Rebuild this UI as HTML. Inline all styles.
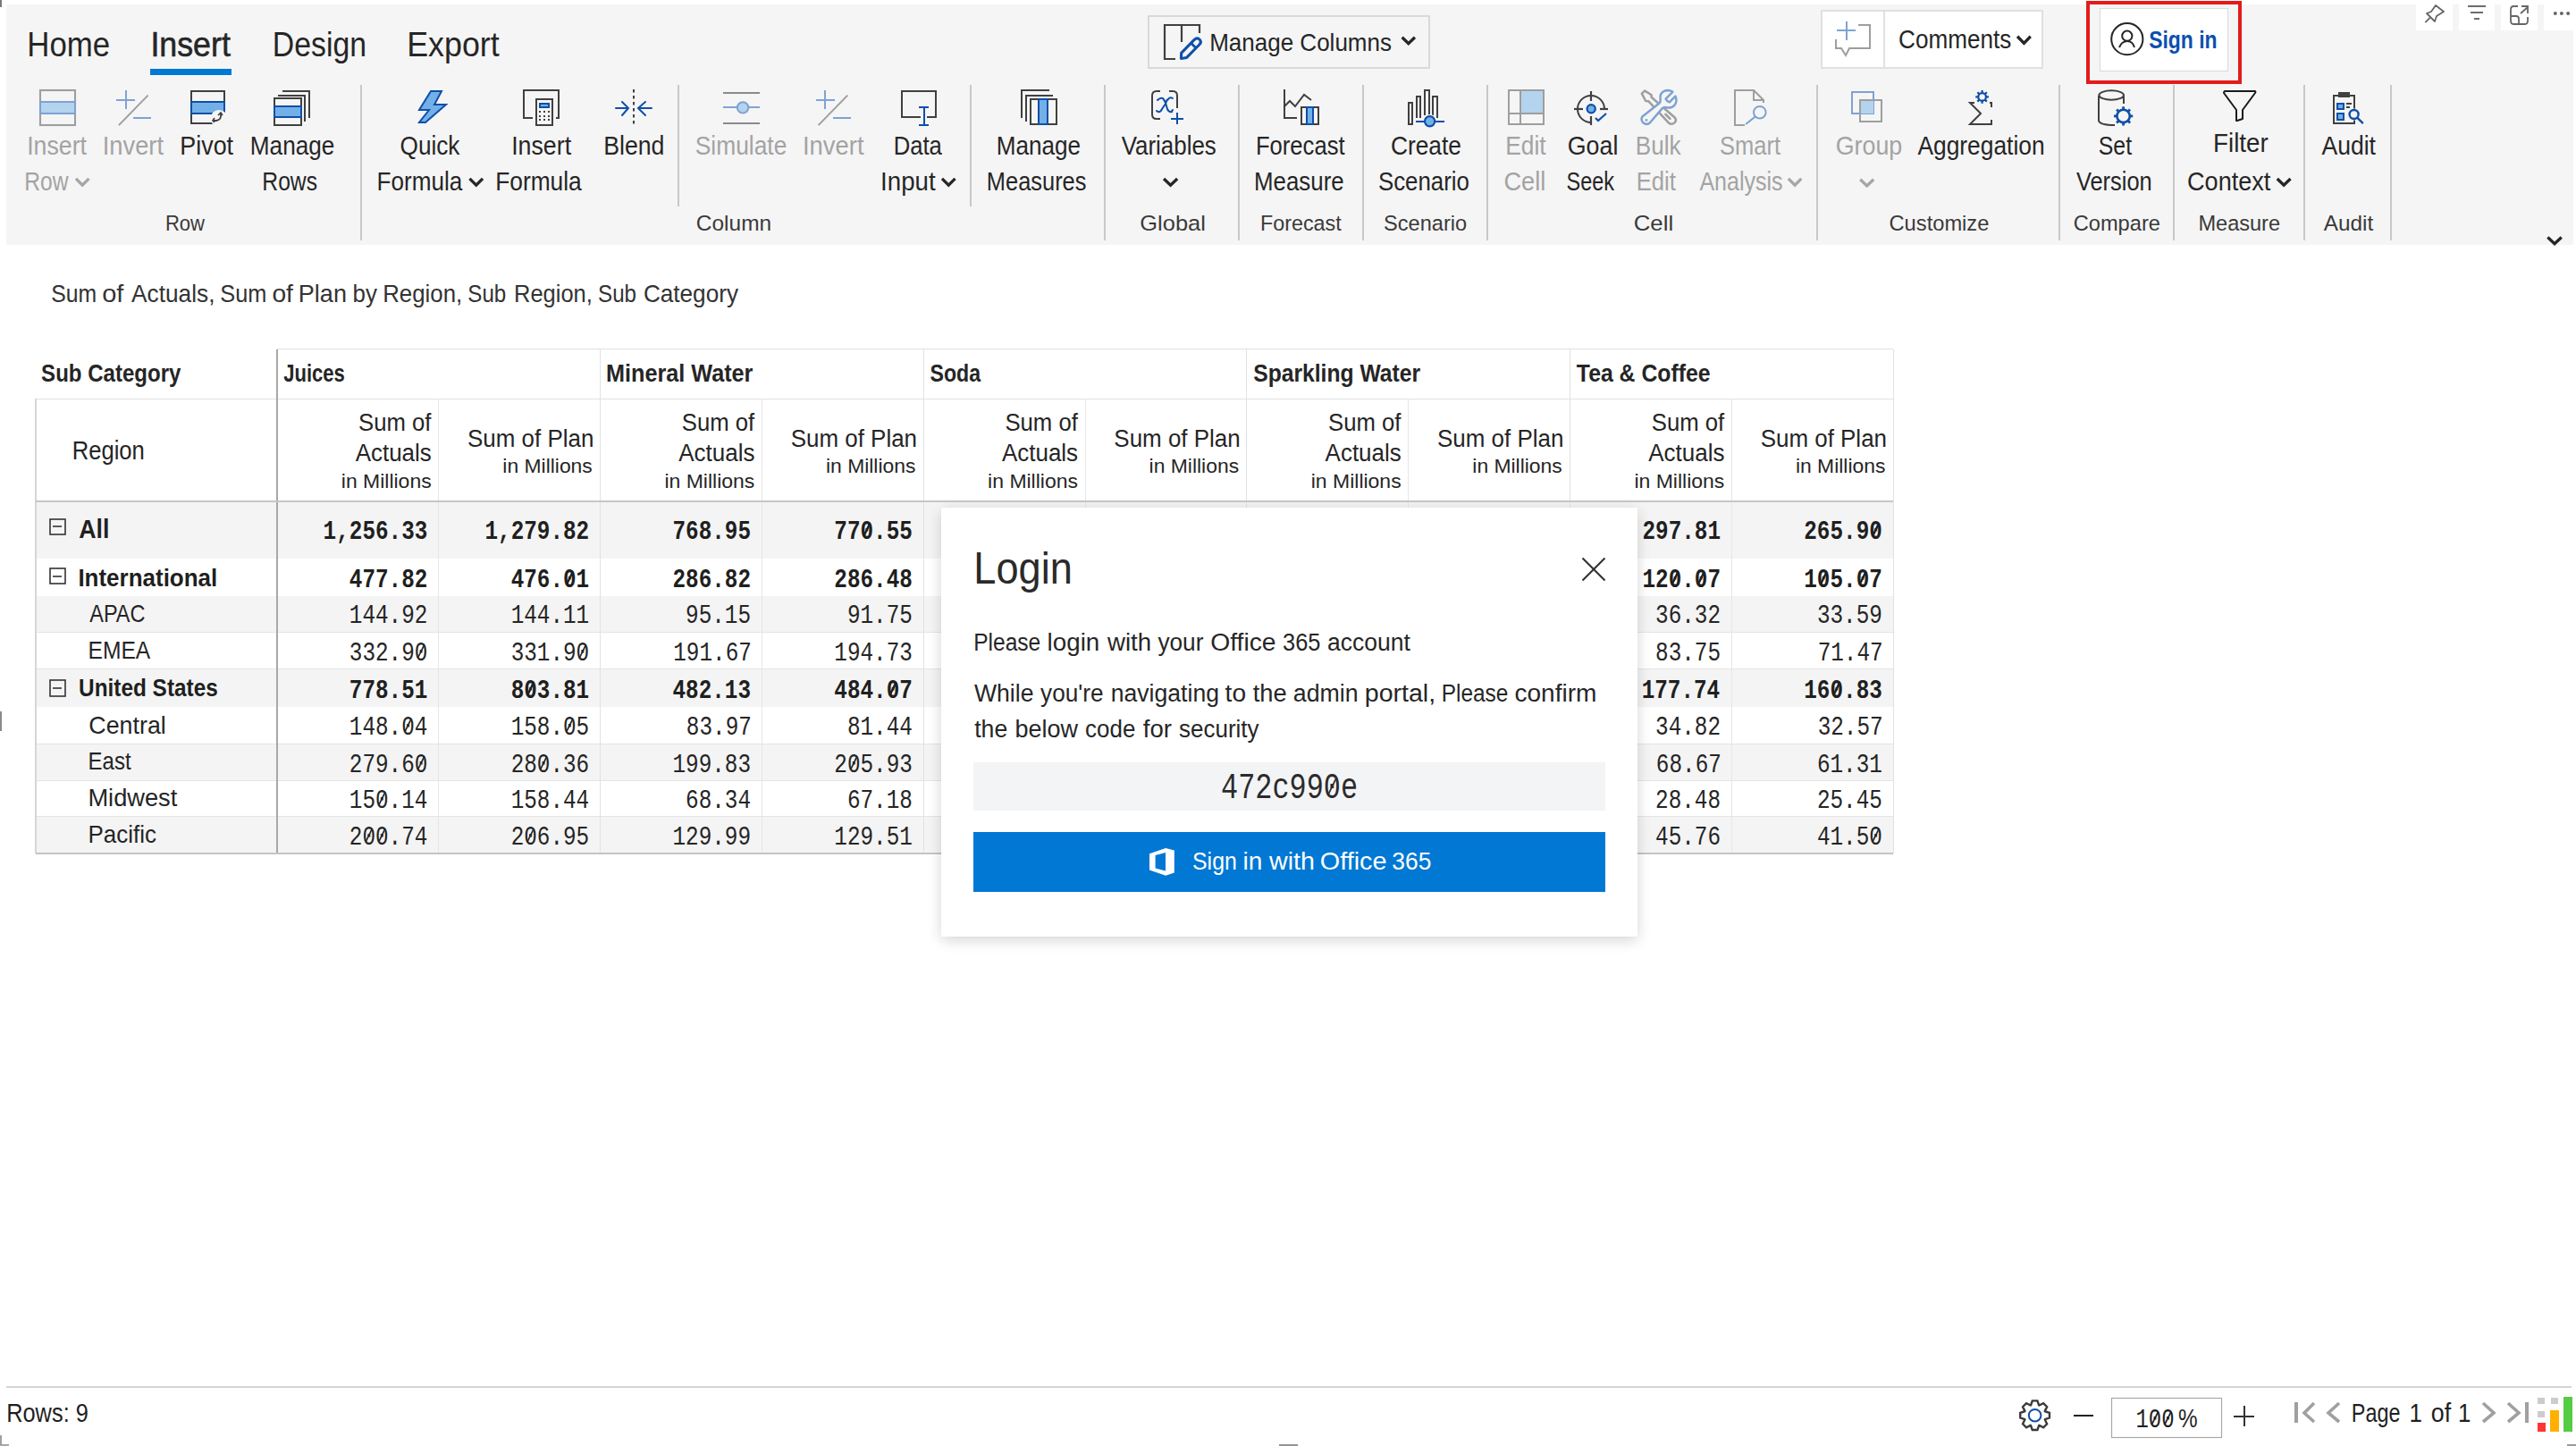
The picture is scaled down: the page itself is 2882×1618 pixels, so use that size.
<!DOCTYPE html>
<html><head><meta charset="utf-8"><title>Inforiver - Insert</title>
<style>html,body{margin:0;padding:0;background:#fff;width:2882px;height:1618px;overflow:hidden;font-family:"Liberation Sans",sans-serif}</style>
</head><body>
<svg width="2882" height="1618" viewBox="0 0 2882 1618" style="display:block"><defs><filter id="sh" x="-10%" y="-10%" width="120%" height="125%"><feGaussianBlur in="SourceAlpha" stdDeviation="8"/><feOffset dy="4" result="b"/><feComponentTransfer><feFuncA type="linear" slope="0.17"/></feComponentTransfer><feMerge><feMergeNode/></feMerge></filter></defs><g id="bg"><rect x="0.00" y="0.00" width="2882.00" height="1618.00" fill="#ffffff" /><rect x="0.00" y="0.00" width="2.00" height="8.00" fill="#7a7a7a" /><rect x="0.00" y="796.00" width="2.00" height="22.00" fill="#8a8a8a" /><path d="M1 1606 V1617 H10" stroke="#8a8a8a" stroke-width="1.6" fill="none" /><rect x="1431.00" y="1616.00" width="21.00" height="2.00" fill="#959595" /><rect x="2872.00" y="1616.00" width="10.00" height="2.00" fill="#9a9a9a" /></g><g id="ribbon"><rect x="7.00" y="5.00" width="2872.00" height="269.00" fill="#f5f5f5" /><rect x="2703.00" y="5.00" width="41.00" height="29.00" fill="#ffffff" /><rect x="2751.00" y="5.00" width="40.00" height="29.00" fill="#ffffff" /><rect x="2798.00" y="5.00" width="41.00" height="29.00" fill="#ffffff" /><rect x="2846.00" y="5.00" width="33.00" height="29.00" fill="#ffffff" /><path d="M2725 6 L2734 13 L2726 18 L2724 24 L2715 15 L2720 13 Z" stroke="#666" stroke-width="1.8" fill="none" stroke-linejoin="round"/><line x1="2718.60" y1="19.90" x2="2713.40" y2="25.10" stroke="#666" stroke-width="1.8" /><line x1="2761.00" y1="7.00" x2="2781.00" y2="7.00" stroke="#666" stroke-width="1.9" /><line x1="2764.00" y1="14.00" x2="2778.00" y2="14.00" stroke="#666" stroke-width="1.9" /><line x1="2768.00" y1="21.00" x2="2774.00" y2="21.00" stroke="#666" stroke-width="1.9" /><path d="M2817 7 H2812 Q2809 7 2809 11 V23 Q2809 27 2812 27 H2825 Q2828 27 2828 23 V19" stroke="#666" stroke-width="1.8" fill="none" /><path d="M2809 18 H2815 Q2818 18 2818 21 V27" stroke="#666" stroke-width="1.8" fill="none" /><path d="M2820 15 L2828 8 M2821 7 H2828 V15" stroke="#666" stroke-width="1.8" fill="none" /><circle cx="2858.8" cy="14.9" r="2" fill="#666"/><circle cx="2865.9" cy="14.9" r="2" fill="#666"/><circle cx="2873.1" cy="14.9" r="2" fill="#666"/><rect x="168.00" y="77.00" width="91.00" height="7.00" fill="#0078d4" /><rect x="1285.00" y="18.00" width="314.00" height="58.00" fill="none" stroke="#d0d0d0" stroke-width="1.5" /><path d="M1315 66 H1303 V28 H1342 V37" stroke="#404040" stroke-width="2.2" fill="none" /><line x1="1322.00" y1="28.00" x2="1322.00" y2="47.00" stroke="#404040" stroke-width="2.2" /><path d="M1321.4 65.4 L1321.6 59.4 L1336.2 44.4 Q1339.4 41.4 1342.2 44.2 Q1344.8 47 1341.8 50 L1327.4 64.6 Z" stroke="#0f4fa8" stroke-width="3" fill="#f5f5f5" stroke-linejoin="round"/><line x1="1332.60" y1="48.20" x2="1337.80" y2="53.40" stroke="#0f4fa8" stroke-width="2.8" /><path d="M1568.65 41.75 L1575.80 48.67 L1582.95 41.75" stroke="#262626" stroke-width="3.3" fill="none" stroke-linecap="butt" stroke-linejoin="miter"/><rect x="2038.00" y="12.00" width="247.00" height="64.00" fill="#ffffff" stroke="#e0e0e0" stroke-width="2" /><line x1="2108.00" y1="12.00" x2="2108.00" y2="76.00" stroke="#e0e0e0" stroke-width="2" /><line x1="2055.00" y1="34.00" x2="2076.00" y2="34.00" stroke="#7ea3d2" stroke-width="2" /><line x1="2066.00" y1="24.00" x2="2066.00" y2="45.00" stroke="#7ea3d2" stroke-width="2" /><path d="M2054 44 V54 H2060 L2065 62 L2069 54 H2092 V28 H2079" stroke="#9e9e9e" stroke-width="2" fill="none" /><path d="M2257.05 40.75 L2264.40 48.37 L2271.75 40.75" stroke="#262626" stroke-width="3.3" fill="none" stroke-linecap="butt" stroke-linejoin="miter"/><rect x="2336.00" y="3.00" width="170.00" height="89.00" fill="none" stroke="#e31b1b" stroke-width="4" /><rect x="2349.50" y="9.50" width="143.00" height="70.00" fill="#ffffff" stroke="#dcdcdc" stroke-width="1.2" /><circle cx="2379.8" cy="43.7" r="17.6" fill="none" stroke="#262626" stroke-width="2"/><circle cx="2379.8" cy="40.2" r="5.6" fill="none" stroke="#262626" stroke-width="2"/><path d="M2371 53 Q2374 46 2380 46 Q2386 46 2388 53" stroke="#262626" stroke-width="2" fill="none" /><path d="M2850.35 265.45 L2858.05 272.67 L2865.75 265.45" stroke="#262626" stroke-width="3.3" fill="none" stroke-linecap="butt" stroke-linejoin="miter"/><rect x="403.00" y="95.00" width="2.00" height="174.00" fill="#c8c8c8" /><rect x="1235.00" y="95.00" width="2.00" height="174.00" fill="#c8c8c8" /><rect x="1385.00" y="95.00" width="2.00" height="174.00" fill="#c8c8c8" /><rect x="1524.00" y="95.00" width="2.00" height="174.00" fill="#c8c8c8" /><rect x="1663.00" y="95.00" width="2.00" height="174.00" fill="#c8c8c8" /><rect x="2032.00" y="95.00" width="2.00" height="174.00" fill="#c8c8c8" /><rect x="2303.00" y="95.00" width="2.00" height="174.00" fill="#c8c8c8" /><rect x="2431.00" y="95.00" width="2.00" height="174.00" fill="#c8c8c8" /><rect x="2577.00" y="95.00" width="2.00" height="174.00" fill="#c8c8c8" /><rect x="2674.00" y="95.00" width="2.00" height="174.00" fill="#c8c8c8" /><rect x="758.00" y="95.00" width="2.00" height="136.00" fill="#c8c8c8" /><rect x="1085.00" y="95.00" width="2.00" height="136.00" fill="#c8c8c8" /><path d="M84.95 199.95 L92.20 207.17 L99.45 199.95" stroke="#a6a6a6" stroke-width="3.3" fill="none" stroke-linecap="butt" stroke-linejoin="miter"/><path d="M525.45 199.95 L532.75 207.17 L540.05 199.95" stroke="#262626" stroke-width="3.3" fill="none" stroke-linecap="butt" stroke-linejoin="miter"/><path d="M1053.95 199.95 L1061.25 207.17 L1068.55 199.95" stroke="#262626" stroke-width="3.3" fill="none" stroke-linecap="butt" stroke-linejoin="miter"/><path d="M1302.05 199.95 L1309.60 207.17 L1317.15 199.95" stroke="#262626" stroke-width="3.3" fill="none" stroke-linecap="butt" stroke-linejoin="miter"/><path d="M2000.85 199.95 L2008.10 207.17 L2015.35 199.95" stroke="#a6a6a6" stroke-width="3.3" fill="none" stroke-linecap="butt" stroke-linejoin="miter"/><path d="M2081.25 200.75 L2088.70 207.97 L2096.15 200.75" stroke="#a6a6a6" stroke-width="3.3" fill="none" stroke-linecap="butt" stroke-linejoin="miter"/><path d="M2547.75 199.95 L2555.15 207.17 L2562.55 199.95" stroke="#262626" stroke-width="3.3" fill="none" stroke-linecap="butt" stroke-linejoin="miter"/><rect x="45.00" y="101.00" width="39.00" height="39.00" fill="none" stroke="#9e9e9e" stroke-width="2.1" /><rect x="45.00" y="114.00" width="39.00" height="13.00" fill="#b4d3ef" stroke="#7ea3d2" stroke-width="2" /><line x1="130.00" y1="112.00" x2="151.00" y2="112.00" stroke="#7ea3d2" stroke-width="2" /><line x1="141.00" y1="101.00" x2="141.00" y2="122.00" stroke="#7ea3d2" stroke-width="2" /><line x1="132.90" y1="140.10" x2="165.60" y2="106.60" stroke="#9e9e9e" stroke-width="2" /><line x1="149.00" y1="132.00" x2="169.00" y2="132.00" stroke="#7ea3d2" stroke-width="2" /><line x1="913.00" y1="112.00" x2="934.00" y2="112.00" stroke="#7ea3d2" stroke-width="2" /><line x1="923.00" y1="101.00" x2="923.00" y2="122.00" stroke="#7ea3d2" stroke-width="2" /><line x1="915.60" y1="140.10" x2="948.30" y2="106.60" stroke="#9e9e9e" stroke-width="2" /><line x1="932.00" y1="132.00" x2="952.00" y2="132.00" stroke="#7ea3d2" stroke-width="2" /><rect x="214.00" y="102.00" width="37.00" height="36.00" fill="none" stroke="#404040" stroke-width="2" /><rect x="214.00" y="114.00" width="37.00" height="13.00" fill="#73b0e8" stroke="#0f4fa8" stroke-width="2" /><circle cx="245" cy="132.5" r="9.5" fill="#f5f5f5"/><path d="M238 135 L242 135 Q247 134 247 130 L247 127" stroke="#404040" stroke-width="1.8" fill="none" /><path d="M240 132 L238 135 L240 137 M244 129 L247 126 L249 129" stroke="#404040" stroke-width="1.6" fill="none" /><rect x="307.00" y="110.00" width="30.00" height="30.00" fill="#f5f5f5" stroke="#404040" stroke-width="2" /><rect x="307.00" y="119.00" width="30.00" height="12.00" fill="#73b0e8" stroke="#0f4fa8" stroke-width="2" /><path d="M311 107 H341 V136" stroke="#404040" stroke-width="2" fill="none" /><path d="M316 102 H346 V132" stroke="#404040" stroke-width="2" fill="none" /><path d="M482 102 H494 L486 117 H499 L476 137 H469 L480 123 H469 Z" stroke="#0f4fa8" stroke-width="2" fill="#73b0e8" stroke-linejoin="miter"/><path d="M596 132 H586 V101 H625 V132 H622" stroke="#404040" stroke-width="2" fill="none" /><rect x="600.00" y="111.00" width="18.00" height="29.00" fill="#f5f5f5" stroke="#404040" stroke-width="2" /><rect x="604.00" y="116.00" width="10.00" height="4.00" fill="#73b0e8" stroke="#0f4fa8" stroke-width="2" /><rect x="603.00" y="124.00" width="2.00" height="2.00" fill="#404040" /><rect x="608.00" y="124.00" width="2.00" height="2.00" fill="#404040" /><rect x="613.00" y="124.00" width="2.00" height="2.00" fill="#404040" /><rect x="603.00" y="129.00" width="2.00" height="2.00" fill="#404040" /><rect x="608.00" y="129.00" width="2.00" height="2.00" fill="#404040" /><rect x="613.00" y="129.00" width="2.00" height="2.00" fill="#404040" /><rect x="603.00" y="133.00" width="2.00" height="2.00" fill="#404040" /><rect x="608.00" y="133.00" width="2.00" height="2.00" fill="#404040" /><rect x="613.00" y="133.00" width="2.00" height="2.00" fill="#404040" /><line x1="709.00" y1="100.00" x2="709.00" y2="141.00" stroke="#404040" stroke-width="2" stroke-dasharray="3.6 3.4"/><path d="M689 121 H703 M696 114 L703 121 L696 129" stroke="#0f4fa8" stroke-width="2" fill="none" stroke-linecap="round"/><path d="M729 121 H714 M722 114 L714 121 L722 129" stroke="#0f4fa8" stroke-width="2" fill="none" stroke-linecap="round"/><line x1="809.00" y1="104.00" x2="850.00" y2="104.00" stroke="#8a8a8a" stroke-width="2" /><line x1="809.00" y1="120.00" x2="850.00" y2="120.00" stroke="#7ea3d2" stroke-width="2" /><circle cx="831.1" cy="120.4" r="6.2" fill="#b4d3ef" stroke="#7ea3d2" stroke-width="2"/><line x1="809.00" y1="138.00" x2="850.00" y2="138.00" stroke="#8a8a8a" stroke-width="2" /><path d="M1030 131 H1009 V102 H1047 V131 H1037" stroke="#404040" stroke-width="2" fill="none" /><line x1="1034.00" y1="120.00" x2="1034.00" y2="140.00" stroke="#0f4fa8" stroke-width="2" /><line x1="1028.00" y1="120.00" x2="1039.00" y2="120.00" stroke="#0f4fa8" stroke-width="2" /><line x1="1028.00" y1="140.00" x2="1039.00" y2="140.00" stroke="#0f4fa8" stroke-width="2" /><path d="M1143 132 V101 H1174" stroke="#404040" stroke-width="2" fill="none" /><path d="M1148 136 V107 H1178" stroke="#404040" stroke-width="2" fill="none" /><rect x="1153.00" y="111.00" width="29.00" height="28.00" fill="#f5f5f5" stroke="#404040" stroke-width="2" /><rect x="1162.00" y="111.00" width="10.00" height="28.00" fill="#73b0e8" stroke="#0f4fa8" stroke-width="2" /><path d="M1298 102 H1294 Q1289 102 1289 107 V128 Q1289 133 1294 133 H1298" stroke="#404040" stroke-width="2" fill="none" /><path d="M1308 102 H1312 Q1317 102 1317 107 V121" stroke="#404040" stroke-width="2" fill="none" /><path d="M1295 112 Q1298 109 1301 110 Q1302 111 1304 115 L1306 122 Q1308 126 1311 125 Q1311 124 1312 123" stroke="#0f4fa8" stroke-width="2" fill="none" stroke-linecap="round"/><path d="M1312 110 Q1309 108 1307 111 Q1305 112 1304 116 L1300 122 Q1298 126 1296 125 Q1295 125 1294 124" stroke="#0f4fa8" stroke-width="2" fill="none" stroke-linecap="round"/><line x1="1310.00" y1="133.00" x2="1324.00" y2="133.00" stroke="#0f4fa8" stroke-width="2" /><line x1="1317.00" y1="126.00" x2="1317.00" y2="139.00" stroke="#0f4fa8" stroke-width="2" /><path d="M1437 100 V132 H1451" stroke="#404040" stroke-width="2" fill="none" /><path d="M1437 119 L1443 113 L1449 119 L1459 106 L1467 112" stroke="#404040" stroke-width="2" fill="none" /><rect x="1456.00" y="120.00" width="19.00" height="19.00" fill="#f5f5f5" stroke="#404040" stroke-width="2" /><rect x="1462.00" y="120.00" width="7.00" height="19.00" fill="#73b0e8" stroke="#0f4fa8" stroke-width="2" /><rect x="1576.00" y="115.00" width="4.00" height="24.00" fill="none" stroke="#404040" stroke-width="2" /><path d="M1585 132 V108 H1589 V132" stroke="#404040" stroke-width="2" fill="none" /><path d="M1594 129 V101 H1599 V129" stroke="#404040" stroke-width="2" fill="none" /><path d="M1603 132 V108 H1608 V132" stroke="#404040" stroke-width="2" fill="none" /><circle cx="1599.6" cy="135.8" r="7.8" fill="#f5f5f5"/><line x1="1584.00" y1="136.00" x2="1616.00" y2="136.00" stroke="#0f4fa8" stroke-width="2" /><circle cx="1599.6" cy="135.8" r="5.6" fill="#73b0e8" stroke="#0f4fa8" stroke-width="2.2"/><rect x="1701.00" y="101.00" width="26.00" height="26.00" fill="#b4d3ef" /><rect x="1688.00" y="101.00" width="39.00" height="38.00" fill="none" stroke="#9e9e9e" stroke-width="2" /><line x1="1701.00" y1="101.00" x2="1701.00" y2="139.00" stroke="#9e9e9e" stroke-width="2" /><line x1="1688.00" y1="127.00" x2="1727.00" y2="127.00" stroke="#9e9e9e" stroke-width="2" /><path d="M1795 122 A15 15 0 1 0 1780 137" stroke="#404040" stroke-width="2" fill="none" /><line x1="1780.00" y1="102.00" x2="1780.00" y2="113.00" stroke="#404040" stroke-width="2.2" /><line x1="1761.00" y1="122.00" x2="1771.00" y2="122.00" stroke="#404040" stroke-width="2.2" /><line x1="1790.00" y1="122.00" x2="1799.00" y2="122.00" stroke="#404040" stroke-width="2.2" /><line x1="1780.00" y1="130.00" x2="1780.00" y2="140.00" stroke="#404040" stroke-width="2.2" /><circle cx="1780.2" cy="121.8" r="4.6" fill="#73b0e8" stroke="#0f4fa8" stroke-width="2.2"/><path d="M1785 132 L1788 135 L1797 127" stroke="#0f4fa8" stroke-width="2.2" fill="none" /><path d="M1840.2 101.6 L1847.6 106.2 L1847.6 108.8 L1873.4 131.2 Q1876.4 134.4 1873.6 137.2 Q1870.4 140.2 1866.8 137.4 L1844.2 113.2 L1841.2 113 L1836.8 104.6 Z" stroke="#9e9e9e" stroke-width="2.5" fill="none" stroke-linejoin="round"/><line x1="1863.40" y1="127.80" x2="1868.40" y2="132.80" stroke="#9e9e9e" stroke-width="2.6" stroke-linecap="round"/><path d="M1837.4 130.4 L1856.4 115.6 Q1858.2 113.6 1857.6 110.6 Q1856.8 104.6 1861.4 102.2 Q1866.6 99.8 1871.4 102.8 L1863.6 110.6 Q1865.2 113.8 1867.8 114.4 L1874.4 107.6 Q1876.8 113.2 1873.6 117.6 Q1869.8 121.6 1864.2 120.2 Q1861.2 119.6 1859.6 121.4 L1846.4 136.8 Q1842.6 140.6 1838.6 137.6 Q1835.2 134.2 1837.4 130.4 Z" stroke="#7ea3d2" stroke-width="2.5" fill="#f5f5f5" stroke-linejoin="round"/><circle cx="1842" cy="134.4" r="1.4" fill="#7ea3d2"/><path d="M1952 140 H1941 V101 H1962 L1973 112 V115" stroke="#9e9e9e" stroke-width="2" fill="none" /><path d="M1962 101 V112 H1973" stroke="#9e9e9e" stroke-width="2" fill="none" /><circle cx="1968.8" cy="125.7" r="6.8" fill="none" stroke="#7ea3d2" stroke-width="2"/><line x1="1963.60" y1="130.60" x2="1953.10" y2="139.00" stroke="#7ea3d2" stroke-width="2" /><rect x="2072.00" y="103.00" width="24.00" height="24.00" fill="none" stroke="#7ea3d2" stroke-width="2" /><rect x="2081.00" y="112.00" width="15.00" height="15.00" fill="#b4d3ef" /><rect x="2081.00" y="112.00" width="24.00" height="24.00" fill="none" stroke="#9e9e9e" stroke-width="2" /><path d="M2209 115 H2204 L2216 127 L2204 139 H2228 V134" stroke="#404040" stroke-width="2" fill="none" /><path d="M2226 115 H2228 V120" stroke="#404040" stroke-width="2" fill="none" /><circle cx="2217.6" cy="108.4" r="4.3" fill="none" stroke="#0f4fa8" stroke-width="2.2"/><line x1="2221.90" y1="108.40" x2="2225.00" y2="108.40" stroke="#0f4fa8" stroke-width="2.2"/><line x1="2220.64" y1="111.44" x2="2222.83" y2="113.63" stroke="#0f4fa8" stroke-width="2.2"/><line x1="2217.60" y1="112.70" x2="2217.60" y2="115.80" stroke="#0f4fa8" stroke-width="2.2"/><line x1="2214.56" y1="111.44" x2="2212.37" y2="113.63" stroke="#0f4fa8" stroke-width="2.2"/><line x1="2213.30" y1="108.40" x2="2210.20" y2="108.40" stroke="#0f4fa8" stroke-width="2.2"/><line x1="2214.56" y1="105.36" x2="2212.37" y2="103.17" stroke="#0f4fa8" stroke-width="2.2"/><line x1="2217.60" y1="104.10" x2="2217.60" y2="101.00" stroke="#0f4fa8" stroke-width="2.2"/><line x1="2220.64" y1="105.36" x2="2222.83" y2="103.17" stroke="#0f4fa8" stroke-width="2.2"/><path d="M2376 116 V107 M2348 107 V135 Q2349 140 2366 140" stroke="#404040" stroke-width="2" fill="none" /><ellipse cx="2362.2" cy="106.5" rx="13.8" ry="5.2" fill="none" stroke="#404040" stroke-width="2"/><circle cx="2375.6" cy="129.9" r="7.2" fill="none" stroke="#0f4fa8" stroke-width="2.6"/><line x1="2382.80" y1="129.90" x2="2386.20" y2="129.90" stroke="#0f4fa8" stroke-width="2.8"/><line x1="2380.69" y1="134.99" x2="2383.10" y2="137.40" stroke="#0f4fa8" stroke-width="2.8"/><line x1="2375.60" y1="137.10" x2="2375.60" y2="140.50" stroke="#0f4fa8" stroke-width="2.8"/><line x1="2370.51" y1="134.99" x2="2368.10" y2="137.40" stroke="#0f4fa8" stroke-width="2.8"/><line x1="2368.40" y1="129.90" x2="2365.00" y2="129.90" stroke="#0f4fa8" stroke-width="2.8"/><line x1="2370.51" y1="124.81" x2="2368.10" y2="122.40" stroke="#0f4fa8" stroke-width="2.8"/><line x1="2375.60" y1="122.70" x2="2375.60" y2="119.30" stroke="#0f4fa8" stroke-width="2.8"/><line x1="2380.69" y1="124.81" x2="2383.10" y2="122.40" stroke="#0f4fa8" stroke-width="2.8"/><path d="M2489 102 H2523 Q2524 103 2523 104 L2509 123 V133 L2503 135 Q2502 135 2502 135 V123 L2488 104 Q2488 103 2489 102 Z" stroke="#1a1a1a" stroke-width="2" fill="none" stroke-linejoin="round"/><rect x="2611.00" y="107.00" width="23.00" height="31.00" fill="none" stroke="#404040" stroke-width="2" /><rect x="2616.00" y="103.00" width="13.00" height="6.00" fill="#404040" /><rect x="2615.00" y="116.00" width="7.00" height="6.00" fill="#73b0e8" stroke="#0f4fa8" stroke-width="2" /><rect x="2615.00" y="127.00" width="7.00" height="7.00" fill="#73b0e8" stroke="#0f4fa8" stroke-width="2" /><line x1="2625.00" y1="116.00" x2="2631.00" y2="116.00" stroke="#404040" stroke-width="2" /><line x1="2625.00" y1="120.00" x2="2629.00" y2="120.00" stroke="#404040" stroke-width="2" /><circle cx="2633.6" cy="128" r="6.6" fill="#f5f5f5"/><circle cx="2633.6" cy="128" r="5" fill="none" stroke="#0f4fa8" stroke-width="2.4"/><line x1="2637.20" y1="131.60" x2="2643.80" y2="138.20" stroke="#0f4fa8" stroke-width="2.4" /><text x="30.27" y="63.10" font-family="Liberation Sans" font-size="38.23" fill="#262626" textLength="92.88" lengthAdjust="spacingAndGlyphs" >Home</text><text x="168.39" y="63.10" font-family="Liberation Sans" font-size="38.23" fill="#262626" textLength="89.45" lengthAdjust="spacingAndGlyphs" stroke="#262626" stroke-width="0.6">Insert</text><text x="304.85" y="63.00" font-family="Liberation Sans" font-size="38.23" fill="#262626" textLength="105.14" lengthAdjust="spacingAndGlyphs" >Design</text><text x="455.19" y="63.00" font-family="Liberation Sans" font-size="38.23" fill="#262626" textLength="103.55" lengthAdjust="spacingAndGlyphs" >Export</text><text x="1353.17" y="57.30" font-family="Liberation Sans" font-size="28.49" fill="#262626" textLength="203.84" lengthAdjust="spacingAndGlyphs" >Manage Columns</text><text x="2124.11" y="53.70" font-family="Liberation Sans" font-size="29.36" fill="#262626" textLength="126.19" lengthAdjust="spacingAndGlyphs" >Comments</text><text x="2404.20" y="53.80" font-family="Liberation Sans" font-size="28.49" fill="#0b50af" font-weight="bold" textLength="76.42" lengthAdjust="spacingAndGlyphs" >Sign in</text><text x="30.16" y="173.10" font-family="Liberation Sans" font-size="29.07" fill="#a3a3a3" textLength="66.80" lengthAdjust="spacingAndGlyphs" >Insert</text><text x="27.30" y="212.70" font-family="Liberation Sans" font-size="29.07" fill="#a3a3a3" textLength="49.33" lengthAdjust="spacingAndGlyphs" >Row</text><text x="114.72" y="173.10" font-family="Liberation Sans" font-size="29.07" fill="#a3a3a3" textLength="68.35" lengthAdjust="spacingAndGlyphs" >Invert</text><text x="201.35" y="173.10" font-family="Liberation Sans" font-size="29.07" fill="#262626" textLength="59.71" lengthAdjust="spacingAndGlyphs" >Pivot</text><text x="279.80" y="173.10" font-family="Liberation Sans" font-size="29.07" fill="#262626" textLength="94.54" lengthAdjust="spacingAndGlyphs" >Manage</text><text x="293.30" y="212.70" font-family="Liberation Sans" font-size="29.07" fill="#262626" textLength="61.75" lengthAdjust="spacingAndGlyphs" >Rows</text><text x="184.88" y="257.70" font-family="Liberation Sans" font-size="24.13" fill="#3a3a3a" textLength="44.18" lengthAdjust="spacingAndGlyphs" >Row</text><text x="447.50" y="173.10" font-family="Liberation Sans" font-size="29.07" fill="#262626" textLength="66.97" lengthAdjust="spacingAndGlyphs" >Quick</text><text x="421.50" y="212.70" font-family="Liberation Sans" font-size="29.07" fill="#262626" textLength="95.74" lengthAdjust="spacingAndGlyphs" >Formula</text><text x="572.16" y="173.10" font-family="Liberation Sans" font-size="29.07" fill="#262626" textLength="66.91" lengthAdjust="spacingAndGlyphs" >Insert</text><text x="554.19" y="212.70" font-family="Liberation Sans" font-size="29.07" fill="#262626" textLength="96.55" lengthAdjust="spacingAndGlyphs" >Formula</text><text x="675.16" y="173.10" font-family="Liberation Sans" font-size="29.07" fill="#262626" textLength="68.30" lengthAdjust="spacingAndGlyphs" >Blend</text><text x="777.69" y="173.10" font-family="Liberation Sans" font-size="29.07" fill="#a3a3a3" textLength="102.66" lengthAdjust="spacingAndGlyphs" >Simulate</text><text x="897.91" y="173.10" font-family="Liberation Sans" font-size="29.07" fill="#a3a3a3" textLength="68.66" lengthAdjust="spacingAndGlyphs" >Invert</text><text x="999.74" y="173.10" font-family="Liberation Sans" font-size="29.07" fill="#262626" textLength="54.12" lengthAdjust="spacingAndGlyphs" >Data</text><text x="985.10" y="212.70" font-family="Liberation Sans" font-size="29.07" fill="#262626" textLength="61.47" lengthAdjust="spacingAndGlyphs" >Input</text><text x="1114.70" y="173.10" font-family="Liberation Sans" font-size="29.07" fill="#262626" textLength="94.33" lengthAdjust="spacingAndGlyphs" >Manage</text><text x="1103.85" y="212.70" font-family="Liberation Sans" font-size="29.07" fill="#262626" textLength="111.61" lengthAdjust="spacingAndGlyphs" >Measures</text><text x="778.89" y="257.70" font-family="Liberation Sans" font-size="24.13" fill="#3a3a3a" textLength="84.24" lengthAdjust="spacingAndGlyphs" >Column</text><text x="1254.70" y="173.10" font-family="Liberation Sans" font-size="29.07" fill="#262626" textLength="106.07" lengthAdjust="spacingAndGlyphs" >Variables</text><text x="1275.35" y="257.70" font-family="Liberation Sans" font-size="24.13" fill="#3a3a3a" textLength="73.48" lengthAdjust="spacingAndGlyphs" >Global</text><text x="1404.94" y="173.10" font-family="Liberation Sans" font-size="29.07" fill="#262626" textLength="99.63" lengthAdjust="spacingAndGlyphs" >Forecast</text><text x="1403.02" y="212.70" font-family="Liberation Sans" font-size="29.07" fill="#262626" textLength="100.61" lengthAdjust="spacingAndGlyphs" >Measure</text><text x="1410.03" y="257.70" font-family="Liberation Sans" font-size="24.13" fill="#3a3a3a" textLength="90.68" lengthAdjust="spacingAndGlyphs" >Forecast</text><text x="1555.89" y="173.10" font-family="Liberation Sans" font-size="29.07" fill="#262626" textLength="79.16" lengthAdjust="spacingAndGlyphs" >Create</text><text x="1541.91" y="212.70" font-family="Liberation Sans" font-size="29.07" fill="#262626" textLength="102.02" lengthAdjust="spacingAndGlyphs" >Scenario</text><text x="1548.02" y="257.70" font-family="Liberation Sans" font-size="24.13" fill="#3a3a3a" textLength="93.08" lengthAdjust="spacingAndGlyphs" >Scenario</text><text x="1684.19" y="173.10" font-family="Liberation Sans" font-size="29.07" fill="#a3a3a3" textLength="45.38" lengthAdjust="spacingAndGlyphs" >Edit</text><text x="1682.46" y="212.70" font-family="Liberation Sans" font-size="29.07" fill="#a3a3a3" textLength="46.90" lengthAdjust="spacingAndGlyphs" >Cell</text><text x="1753.78" y="173.10" font-family="Liberation Sans" font-size="29.07" fill="#262626" textLength="56.56" lengthAdjust="spacingAndGlyphs" >Goal</text><text x="1752.49" y="212.70" font-family="Liberation Sans" font-size="29.07" fill="#262626" textLength="53.52" lengthAdjust="spacingAndGlyphs" >Seek</text><text x="1829.80" y="173.10" font-family="Liberation Sans" font-size="29.07" fill="#a3a3a3" textLength="50.77" lengthAdjust="spacingAndGlyphs" >Bulk</text><text x="1830.63" y="212.70" font-family="Liberation Sans" font-size="29.07" fill="#a3a3a3" textLength="44.33" lengthAdjust="spacingAndGlyphs" >Edit</text><text x="1924.12" y="173.10" font-family="Liberation Sans" font-size="29.07" fill="#a3a3a3" textLength="67.94" lengthAdjust="spacingAndGlyphs" >Smart</text><text x="1901.40" y="212.70" font-family="Liberation Sans" font-size="29.07" fill="#a3a3a3" textLength="93.15" lengthAdjust="spacingAndGlyphs" >Analysis</text><text x="1827.73" y="257.70" font-family="Liberation Sans" font-size="24.13" fill="#3a3a3a" textLength="44.42" lengthAdjust="spacingAndGlyphs" >Cell</text><text x="2053.78" y="173.10" font-family="Liberation Sans" font-size="29.07" fill="#a3a3a3" textLength="74.49" lengthAdjust="spacingAndGlyphs" >Group</text><text x="2145.40" y="173.10" font-family="Liberation Sans" font-size="29.07" fill="#262626" textLength="142.25" lengthAdjust="spacingAndGlyphs" >Aggregation</text><text x="2113.52" y="257.70" font-family="Liberation Sans" font-size="24.13" fill="#3a3a3a" textLength="111.88" lengthAdjust="spacingAndGlyphs" >Customize</text><text x="2347.74" y="173.10" font-family="Liberation Sans" font-size="29.07" fill="#262626" textLength="37.32" lengthAdjust="spacingAndGlyphs" >Set</text><text x="2322.90" y="212.70" font-family="Liberation Sans" font-size="29.07" fill="#262626" textLength="84.81" lengthAdjust="spacingAndGlyphs" >Version</text><text x="2319.72" y="257.70" font-family="Liberation Sans" font-size="24.13" fill="#3a3a3a" textLength="97.18" lengthAdjust="spacingAndGlyphs" >Compare</text><text x="2476.09" y="169.50" font-family="Liberation Sans" font-size="29.07" fill="#262626" textLength="61.60" lengthAdjust="spacingAndGlyphs" >Filter</text><text x="2447.07" y="212.70" font-family="Liberation Sans" font-size="29.07" fill="#262626" textLength="93.30" lengthAdjust="spacingAndGlyphs" >Context</text><text x="2459.42" y="257.70" font-family="Liberation Sans" font-size="24.13" fill="#3a3a3a" textLength="91.68" lengthAdjust="spacingAndGlyphs" >Measure</text><text x="2597.50" y="173.10" font-family="Liberation Sans" font-size="29.07" fill="#262626" textLength="60.46" lengthAdjust="spacingAndGlyphs" >Audit</text><text x="2599.80" y="257.70" font-family="Liberation Sans" font-size="24.13" fill="#3a3a3a" textLength="55.50" lengthAdjust="spacingAndGlyphs" >Audit</text></g><g id="table"><rect x="40.00" y="446.00" width="2078.00" height="115.00" fill="#ffffff" /><rect x="40.00" y="561.00" width="2078.00" height="64.00" fill="#f4f4f4" /><rect x="40.00" y="625.00" width="2078.00" height="42.00" fill="#ffffff" /><rect x="40.00" y="667.00" width="2078.00" height="40.00" fill="#f4f4f4" /><rect x="40.00" y="707.00" width="2078.00" height="41.00" fill="#ffffff" /><rect x="40.00" y="748.00" width="2078.00" height="43.00" fill="#f4f4f4" /><rect x="40.00" y="791.00" width="2078.00" height="42.00" fill="#ffffff" /><rect x="40.00" y="833.00" width="2078.00" height="40.00" fill="#f4f4f4" /><rect x="40.00" y="873.00" width="2078.00" height="41.00" fill="#ffffff" /><rect x="40.00" y="914.00" width="2078.00" height="41.00" fill="#f4f4f4" /><rect x="40.00" y="707.00" width="2078.00" height="1.00" fill="#e4e4e4" /><rect x="40.00" y="748.00" width="2078.00" height="1.00" fill="#e4e4e4" /><rect x="40.00" y="832.00" width="2078.00" height="1.00" fill="#e4e4e4" /><rect x="40.00" y="873.00" width="2078.00" height="1.00" fill="#e4e4e4" /><rect x="40.00" y="913.00" width="2078.00" height="1.00" fill="#e4e4e4" /><rect x="490.00" y="446.00" width="1.00" height="509.00" fill="#e6e6e6" /><rect x="671.00" y="391.00" width="1.00" height="564.00" fill="#e2e2e2" /><rect x="852.00" y="446.00" width="1.00" height="509.00" fill="#e6e6e6" /><rect x="1033.00" y="391.00" width="1.00" height="564.00" fill="#e2e2e2" /><rect x="1214.00" y="446.00" width="1.00" height="509.00" fill="#e6e6e6" /><rect x="1394.00" y="391.00" width="1.00" height="564.00" fill="#e2e2e2" /><rect x="1575.00" y="446.00" width="1.00" height="509.00" fill="#e6e6e6" /><rect x="1756.00" y="391.00" width="1.00" height="564.00" fill="#e2e2e2" /><rect x="1937.00" y="446.00" width="1.00" height="509.00" fill="#e6e6e6" /><rect x="2118.00" y="391.00" width="1.00" height="564.00" fill="#e2e2e2" /><rect x="310.00" y="390.00" width="1808.00" height="1.00" fill="#e0e0e0" /><rect x="40.00" y="446.00" width="2078.00" height="1.00" fill="#e2e2e2" /><rect x="39.00" y="446.00" width="2.00" height="509.00" fill="#d6d6d6" /><rect x="309.00" y="391.00" width="2.00" height="564.00" fill="#a8a8a8" /><rect x="40.00" y="560.00" width="2078.00" height="2.00" fill="#c6c6c6" /><rect x="40.00" y="954.00" width="2078.00" height="2.00" fill="#c4c4c4" /></g><g id="tabletext"><rect x="56.00" y="581.00" width="17.00" height="17.00" fill="none" stroke="#333333" stroke-width="1.6" /><line x1="59.00" y1="589.00" x2="69.00" y2="589.00" stroke="#333333" stroke-width="1.6" /><rect x="56.00" y="636.00" width="17.00" height="17.00" fill="none" stroke="#333333" stroke-width="1.6" /><line x1="59.00" y1="645.00" x2="69.00" y2="645.00" stroke="#333333" stroke-width="1.6" /><rect x="56.00" y="761.00" width="17.00" height="18.00" fill="none" stroke="#333333" stroke-width="1.6" /><line x1="59.00" y1="770.00" x2="69.00" y2="770.00" stroke="#333333" stroke-width="1.6" /><text x="57.23" y="338.10" font-family="Liberation Sans" font-size="28.49" fill="#333333" textLength="50.96" lengthAdjust="spacingAndGlyphs" >Sum</text><text x="114.18" y="338.10" font-family="Liberation Sans" font-size="28.49" fill="#333333" textLength="24.23" lengthAdjust="spacingAndGlyphs" >of</text><text x="147.00" y="338.10" font-family="Liberation Sans" font-size="28.49" fill="#333333" textLength="93.46" lengthAdjust="spacingAndGlyphs" >Actuals,</text><text x="246.31" y="338.10" font-family="Liberation Sans" font-size="28.49" fill="#333333" textLength="52.12" lengthAdjust="spacingAndGlyphs" >Sum</text><text x="304.41" y="338.10" font-family="Liberation Sans" font-size="28.49" fill="#333333" textLength="23.50" lengthAdjust="spacingAndGlyphs" >of</text><text x="333.80" y="338.10" font-family="Liberation Sans" font-size="28.49" fill="#333333" textLength="54.14" lengthAdjust="spacingAndGlyphs" >Plan</text><text x="394.59" y="338.10" font-family="Liberation Sans" font-size="28.49" fill="#333333" textLength="27.41" lengthAdjust="spacingAndGlyphs" >by</text><text x="428.19" y="338.10" font-family="Liberation Sans" font-size="28.49" fill="#333333" textLength="89.05" lengthAdjust="spacingAndGlyphs" >Region,</text><text x="523.35" y="338.10" font-family="Liberation Sans" font-size="28.49" fill="#333333" textLength="42.95" lengthAdjust="spacingAndGlyphs" >Sub</text><text x="575.01" y="338.10" font-family="Liberation Sans" font-size="28.49" fill="#333333" textLength="87.80" lengthAdjust="spacingAndGlyphs" >Region,</text><text x="669.05" y="338.10" font-family="Liberation Sans" font-size="28.49" fill="#333333" textLength="42.95" lengthAdjust="spacingAndGlyphs" >Sub</text><text x="719.88" y="338.10" font-family="Liberation Sans" font-size="28.49" fill="#333333" textLength="106.12" lengthAdjust="spacingAndGlyphs" >Category</text><text x="46.10" y="426.80" font-family="Liberation Sans" font-size="28.34" fill="#252525" font-weight="bold" textLength="156.29" lengthAdjust="spacingAndGlyphs" >Sub Category</text><text x="317.20" y="427.00" font-family="Liberation Sans" font-size="28.49" fill="#252525" font-weight="bold" textLength="68.65" lengthAdjust="spacingAndGlyphs" >Juices</text><text x="677.97" y="427.00" font-family="Liberation Sans" font-size="28.49" fill="#252525" font-weight="bold" textLength="164.46" lengthAdjust="spacingAndGlyphs" >Mineral Water</text><text x="1040.52" y="427.00" font-family="Liberation Sans" font-size="28.49" fill="#252525" font-weight="bold" textLength="56.55" lengthAdjust="spacingAndGlyphs" >Soda</text><text x="1402.18" y="427.00" font-family="Liberation Sans" font-size="28.49" fill="#252525" font-weight="bold" textLength="186.97" lengthAdjust="spacingAndGlyphs" >Sparkling Water</text><text x="1763.84" y="427.00" font-family="Liberation Sans" font-size="28.49" fill="#252525" font-weight="bold" textLength="149.73" lengthAdjust="spacingAndGlyphs" >Tea &amp; Coffee</text><text x="80.65" y="514.20" font-family="Liberation Sans" font-size="29.36" fill="#252525" textLength="81.20" lengthAdjust="spacingAndGlyphs" >Region</text><text x="401.12" y="482.30" font-family="Liberation Sans" font-size="28.34" fill="#252525" textLength="81.39" lengthAdjust="spacingAndGlyphs" >Sum of</text><text x="397.63" y="516.30" font-family="Liberation Sans" font-size="28.34" fill="#252525" textLength="85.15" lengthAdjust="spacingAndGlyphs" >Actuals</text><text x="381.79" y="545.90" font-family="Liberation Sans" font-size="22.09" fill="#252525" textLength="100.88" lengthAdjust="spacingAndGlyphs" >in Millions</text><text x="523.04" y="499.50" font-family="Liberation Sans" font-size="28.34" fill="#252525" textLength="141.32" lengthAdjust="spacingAndGlyphs" >Sum of Plan</text><text x="562.32" y="528.60" font-family="Liberation Sans" font-size="22.09" fill="#252525" textLength="100.48" lengthAdjust="spacingAndGlyphs" >in Millions</text><text x="762.78" y="482.30" font-family="Liberation Sans" font-size="28.34" fill="#252525" textLength="81.39" lengthAdjust="spacingAndGlyphs" >Sum of</text><text x="759.29" y="516.30" font-family="Liberation Sans" font-size="28.34" fill="#252525" textLength="85.15" lengthAdjust="spacingAndGlyphs" >Actuals</text><text x="743.45" y="545.90" font-family="Liberation Sans" font-size="22.09" fill="#252525" textLength="100.88" lengthAdjust="spacingAndGlyphs" >in Millions</text><text x="884.70" y="499.50" font-family="Liberation Sans" font-size="28.34" fill="#252525" textLength="141.32" lengthAdjust="spacingAndGlyphs" >Sum of Plan</text><text x="923.98" y="528.60" font-family="Liberation Sans" font-size="22.09" fill="#252525" textLength="100.48" lengthAdjust="spacingAndGlyphs" >in Millions</text><text x="1124.44" y="482.30" font-family="Liberation Sans" font-size="28.34" fill="#252525" textLength="81.39" lengthAdjust="spacingAndGlyphs" >Sum of</text><text x="1120.95" y="516.30" font-family="Liberation Sans" font-size="28.34" fill="#252525" textLength="85.15" lengthAdjust="spacingAndGlyphs" >Actuals</text><text x="1105.11" y="545.90" font-family="Liberation Sans" font-size="22.09" fill="#252525" textLength="100.88" lengthAdjust="spacingAndGlyphs" >in Millions</text><text x="1246.36" y="499.50" font-family="Liberation Sans" font-size="28.34" fill="#252525" textLength="141.32" lengthAdjust="spacingAndGlyphs" >Sum of Plan</text><text x="1285.64" y="528.60" font-family="Liberation Sans" font-size="22.09" fill="#252525" textLength="100.48" lengthAdjust="spacingAndGlyphs" >in Millions</text><text x="1486.10" y="482.30" font-family="Liberation Sans" font-size="28.34" fill="#252525" textLength="81.39" lengthAdjust="spacingAndGlyphs" >Sum of</text><text x="1482.61" y="516.30" font-family="Liberation Sans" font-size="28.34" fill="#252525" textLength="85.15" lengthAdjust="spacingAndGlyphs" >Actuals</text><text x="1466.77" y="545.90" font-family="Liberation Sans" font-size="22.09" fill="#252525" textLength="100.88" lengthAdjust="spacingAndGlyphs" >in Millions</text><text x="1608.02" y="499.50" font-family="Liberation Sans" font-size="28.34" fill="#252525" textLength="141.32" lengthAdjust="spacingAndGlyphs" >Sum of Plan</text><text x="1647.30" y="528.60" font-family="Liberation Sans" font-size="22.09" fill="#252525" textLength="100.48" lengthAdjust="spacingAndGlyphs" >in Millions</text><text x="1847.76" y="482.30" font-family="Liberation Sans" font-size="28.34" fill="#252525" textLength="81.39" lengthAdjust="spacingAndGlyphs" >Sum of</text><text x="1844.27" y="516.30" font-family="Liberation Sans" font-size="28.34" fill="#252525" textLength="85.15" lengthAdjust="spacingAndGlyphs" >Actuals</text><text x="1828.43" y="545.90" font-family="Liberation Sans" font-size="22.09" fill="#252525" textLength="100.88" lengthAdjust="spacingAndGlyphs" >in Millions</text><text x="1969.68" y="499.50" font-family="Liberation Sans" font-size="28.34" fill="#252525" textLength="141.32" lengthAdjust="spacingAndGlyphs" >Sum of Plan</text><text x="2008.96" y="528.60" font-family="Liberation Sans" font-size="22.09" fill="#252525" textLength="100.48" lengthAdjust="spacingAndGlyphs" >in Millions</text><text x="88.30" y="601.90" font-family="Liberation Sans" font-size="29.07" fill="#1f1f1f" font-weight="bold" textLength="34.19" lengthAdjust="spacingAndGlyphs" >All</text><text x="87.38" y="655.80" font-family="Liberation Sans" font-size="28.20" fill="#1f1f1f" font-weight="bold" textLength="155.91" lengthAdjust="spacingAndGlyphs" >International</text><text x="88.04" y="779.40" font-family="Liberation Sans" font-size="28.20" fill="#1f1f1f" font-weight="bold" textLength="155.75" lengthAdjust="spacingAndGlyphs" >United States</text><text x="100.30" y="695.60" font-family="Liberation Sans" font-size="28.49" fill="#252525" textLength="62.16" lengthAdjust="spacingAndGlyphs" >APAC</text><text x="98.57" y="736.60" font-family="Liberation Sans" font-size="28.49" fill="#252525" textLength="69.72" lengthAdjust="spacingAndGlyphs" >EMEA</text><text x="99.36" y="820.50" font-family="Liberation Sans" font-size="28.49" fill="#252525" textLength="86.39" lengthAdjust="spacingAndGlyphs" >Central</text><text x="98.61" y="861.30" font-family="Liberation Sans" font-size="28.49" fill="#252525" textLength="48.01" lengthAdjust="spacingAndGlyphs" >East</text><text x="98.39" y="902.40" font-family="Liberation Sans" font-size="28.49" fill="#252525" textLength="99.93" lengthAdjust="spacingAndGlyphs" >Midwest</text><text x="98.48" y="942.90" font-family="Liberation Sans" font-size="28.49" fill="#252525" textLength="76.44" lengthAdjust="spacingAndGlyphs" >Pacific</text><text x="361.62" y="602.80" font-family="Liberation Mono" font-size="30.35" fill="#1f1f1f" font-weight="bold" textLength="116.77" lengthAdjust="spacingAndGlyphs" >1,256.33</text><text x="542.45" y="602.80" font-family="Liberation Mono" font-size="30.35" fill="#1f1f1f" font-weight="bold" textLength="116.77" lengthAdjust="spacingAndGlyphs" >1,279.82</text><text x="390.81" y="657.00" font-family="Liberation Mono" font-size="30.35" fill="#1f1f1f" font-weight="bold" textLength="87.58" lengthAdjust="spacingAndGlyphs" >477.82</text><text x="571.64" y="657.00" font-family="Liberation Mono" font-size="30.35" fill="#1f1f1f" font-weight="bold" textLength="87.58" lengthAdjust="spacingAndGlyphs" >476.01</text><line x1="633.82" y1="654.20" x2="640.83" y2="639.80" stroke="#1f1f1f" stroke-width="2.4"/><text x="390.81" y="697.10" font-family="Liberation Mono" font-size="30.35" fill="#252525" textLength="87.58" lengthAdjust="spacingAndGlyphs" >144.92</text><text x="571.64" y="697.10" font-family="Liberation Mono" font-size="30.35" fill="#252525" textLength="87.58" lengthAdjust="spacingAndGlyphs" >144.11</text><text x="390.81" y="738.80" font-family="Liberation Mono" font-size="30.35" fill="#252525" textLength="87.58" lengthAdjust="spacingAndGlyphs" >332.90</text><line x1="467.59" y1="736.00" x2="474.60" y2="721.60" stroke="#252525" stroke-width="1.7"/><text x="571.64" y="738.80" font-family="Liberation Mono" font-size="30.35" fill="#252525" textLength="87.58" lengthAdjust="spacingAndGlyphs" >331.90</text><line x1="648.42" y1="736.00" x2="655.43" y2="721.60" stroke="#252525" stroke-width="1.7"/><text x="390.81" y="780.80" font-family="Liberation Mono" font-size="30.35" fill="#1f1f1f" font-weight="bold" textLength="87.58" lengthAdjust="spacingAndGlyphs" >778.51</text><text x="571.64" y="780.80" font-family="Liberation Mono" font-size="30.35" fill="#1f1f1f" font-weight="bold" textLength="87.58" lengthAdjust="spacingAndGlyphs" >803.81</text><line x1="590.04" y1="778.00" x2="597.04" y2="763.60" stroke="#1f1f1f" stroke-width="2.4"/><text x="390.81" y="821.50" font-family="Liberation Mono" font-size="30.35" fill="#252525" textLength="87.58" lengthAdjust="spacingAndGlyphs" >148.04</text><line x1="452.99" y1="818.70" x2="460.00" y2="804.30" stroke="#252525" stroke-width="1.7"/><text x="571.64" y="821.50" font-family="Liberation Mono" font-size="30.35" fill="#252525" textLength="87.58" lengthAdjust="spacingAndGlyphs" >158.05</text><line x1="633.82" y1="818.70" x2="640.83" y2="804.30" stroke="#252525" stroke-width="1.7"/><text x="390.81" y="863.80" font-family="Liberation Mono" font-size="30.35" fill="#252525" textLength="87.58" lengthAdjust="spacingAndGlyphs" >279.60</text><line x1="467.59" y1="861.00" x2="474.60" y2="846.60" stroke="#252525" stroke-width="1.7"/><text x="571.64" y="863.80" font-family="Liberation Mono" font-size="30.35" fill="#252525" textLength="87.58" lengthAdjust="spacingAndGlyphs" >280.36</text><line x1="604.63" y1="861.00" x2="611.64" y2="846.60" stroke="#252525" stroke-width="1.7"/><text x="390.81" y="903.70" font-family="Liberation Mono" font-size="30.35" fill="#252525" textLength="87.58" lengthAdjust="spacingAndGlyphs" >150.14</text><line x1="423.80" y1="900.90" x2="430.81" y2="886.50" stroke="#252525" stroke-width="1.7"/><text x="571.64" y="903.70" font-family="Liberation Mono" font-size="30.35" fill="#252525" textLength="87.58" lengthAdjust="spacingAndGlyphs" >158.44</text><text x="390.81" y="944.70" font-family="Liberation Mono" font-size="30.35" fill="#252525" textLength="87.58" lengthAdjust="spacingAndGlyphs" >200.74</text><line x1="409.21" y1="941.90" x2="416.21" y2="927.50" stroke="#252525" stroke-width="1.7"/><line x1="423.80" y1="941.90" x2="430.81" y2="927.50" stroke="#252525" stroke-width="1.7"/><text x="571.64" y="944.70" font-family="Liberation Mono" font-size="30.35" fill="#252525" textLength="87.58" lengthAdjust="spacingAndGlyphs" >206.95</text><line x1="590.04" y1="941.90" x2="597.04" y2="927.50" stroke="#252525" stroke-width="1.7"/><text x="752.47" y="602.80" font-family="Liberation Mono" font-size="30.35" fill="#1f1f1f" font-weight="bold" textLength="87.58" lengthAdjust="spacingAndGlyphs" >768.95</text><text x="933.30" y="602.80" font-family="Liberation Mono" font-size="30.35" fill="#1f1f1f" font-weight="bold" textLength="87.58" lengthAdjust="spacingAndGlyphs" >770.55</text><line x1="966.29" y1="600.00" x2="973.30" y2="585.60" stroke="#1f1f1f" stroke-width="2.4"/><text x="752.47" y="657.00" font-family="Liberation Mono" font-size="30.35" fill="#1f1f1f" font-weight="bold" textLength="87.58" lengthAdjust="spacingAndGlyphs" >286.82</text><text x="933.30" y="657.00" font-family="Liberation Mono" font-size="30.35" fill="#1f1f1f" font-weight="bold" textLength="87.58" lengthAdjust="spacingAndGlyphs" >286.48</text><text x="767.07" y="697.10" font-family="Liberation Mono" font-size="30.35" fill="#252525" textLength="72.98" lengthAdjust="spacingAndGlyphs" >95.15</text><text x="947.90" y="697.10" font-family="Liberation Mono" font-size="30.35" fill="#252525" textLength="72.98" lengthAdjust="spacingAndGlyphs" >91.75</text><text x="753.28" y="738.80" font-family="Liberation Mono" font-size="30.35" fill="#252525" textLength="87.58" lengthAdjust="spacingAndGlyphs" >191.67</text><text x="933.30" y="738.80" font-family="Liberation Mono" font-size="30.35" fill="#252525" textLength="87.58" lengthAdjust="spacingAndGlyphs" >194.73</text><text x="752.47" y="780.80" font-family="Liberation Mono" font-size="30.35" fill="#1f1f1f" font-weight="bold" textLength="87.58" lengthAdjust="spacingAndGlyphs" >482.13</text><text x="933.30" y="780.80" font-family="Liberation Mono" font-size="30.35" fill="#1f1f1f" font-weight="bold" textLength="87.58" lengthAdjust="spacingAndGlyphs" >484.07</text><line x1="995.48" y1="778.00" x2="1002.49" y2="763.60" stroke="#1f1f1f" stroke-width="2.4"/><text x="767.87" y="821.50" font-family="Liberation Mono" font-size="30.35" fill="#252525" textLength="72.98" lengthAdjust="spacingAndGlyphs" >83.97</text><text x="947.90" y="821.50" font-family="Liberation Mono" font-size="30.35" fill="#252525" textLength="72.98" lengthAdjust="spacingAndGlyphs" >81.44</text><text x="752.47" y="863.80" font-family="Liberation Mono" font-size="30.35" fill="#252525" textLength="87.58" lengthAdjust="spacingAndGlyphs" >199.83</text><text x="933.30" y="863.80" font-family="Liberation Mono" font-size="30.35" fill="#252525" textLength="87.58" lengthAdjust="spacingAndGlyphs" >205.93</text><line x1="951.70" y1="861.00" x2="958.70" y2="846.60" stroke="#252525" stroke-width="1.7"/><text x="767.07" y="903.70" font-family="Liberation Mono" font-size="30.35" fill="#252525" textLength="72.98" lengthAdjust="spacingAndGlyphs" >68.34</text><text x="947.90" y="903.70" font-family="Liberation Mono" font-size="30.35" fill="#252525" textLength="72.98" lengthAdjust="spacingAndGlyphs" >67.18</text><text x="752.47" y="944.70" font-family="Liberation Mono" font-size="30.35" fill="#252525" textLength="87.58" lengthAdjust="spacingAndGlyphs" >129.99</text><text x="933.30" y="944.70" font-family="Liberation Mono" font-size="30.35" fill="#252525" textLength="87.58" lengthAdjust="spacingAndGlyphs" >129.51</text><text x="1114.13" y="602.80" font-family="Liberation Mono" font-size="30.35" fill="#1f1f1f" font-weight="bold" textLength="87.58" lengthAdjust="spacingAndGlyphs" >384.12</text><text x="1294.16" y="602.80" font-family="Liberation Mono" font-size="30.35" fill="#1f1f1f" font-weight="bold" textLength="87.58" lengthAdjust="spacingAndGlyphs" >390.44</text><line x1="1327.15" y1="600.00" x2="1334.16" y2="585.60" stroke="#1f1f1f" stroke-width="2.4"/><text x="1114.13" y="657.00" font-family="Liberation Mono" font-size="30.35" fill="#1f1f1f" font-weight="bold" textLength="87.58" lengthAdjust="spacingAndGlyphs" >143.51</text><text x="1294.96" y="657.00" font-family="Liberation Mono" font-size="30.35" fill="#1f1f1f" font-weight="bold" textLength="87.58" lengthAdjust="spacingAndGlyphs" >141.20</text><line x1="1371.74" y1="654.20" x2="1378.75" y2="639.80" stroke="#1f1f1f" stroke-width="2.4"/><text x="1128.73" y="697.10" font-family="Liberation Mono" font-size="30.35" fill="#252525" textLength="72.98" lengthAdjust="spacingAndGlyphs" >47.65</text><text x="1309.56" y="697.10" font-family="Liberation Mono" font-size="30.35" fill="#252525" textLength="72.98" lengthAdjust="spacingAndGlyphs" >46.91</text><text x="1128.73" y="738.80" font-family="Liberation Mono" font-size="30.35" fill="#252525" textLength="72.98" lengthAdjust="spacingAndGlyphs" >95.86</text><text x="1309.56" y="738.80" font-family="Liberation Mono" font-size="30.35" fill="#252525" textLength="72.98" lengthAdjust="spacingAndGlyphs" >94.29</text><text x="1114.13" y="780.80" font-family="Liberation Mono" font-size="30.35" fill="#1f1f1f" font-weight="bold" textLength="87.58" lengthAdjust="spacingAndGlyphs" >240.61</text><line x1="1147.12" y1="778.00" x2="1154.13" y2="763.60" stroke="#1f1f1f" stroke-width="2.4"/><text x="1294.16" y="780.80" font-family="Liberation Mono" font-size="30.35" fill="#1f1f1f" font-weight="bold" textLength="87.58" lengthAdjust="spacingAndGlyphs" >249.24</text><text x="1128.73" y="821.50" font-family="Liberation Mono" font-size="30.35" fill="#252525" textLength="72.98" lengthAdjust="spacingAndGlyphs" >41.98</text><text x="1309.56" y="821.50" font-family="Liberation Mono" font-size="30.35" fill="#252525" textLength="72.98" lengthAdjust="spacingAndGlyphs" >43.21</text><text x="1128.73" y="863.80" font-family="Liberation Mono" font-size="30.35" fill="#252525" textLength="72.98" lengthAdjust="spacingAndGlyphs" >99.91</text><text x="1294.96" y="863.80" font-family="Liberation Mono" font-size="30.35" fill="#252525" textLength="87.58" lengthAdjust="spacingAndGlyphs" >102.96</text><line x1="1313.36" y1="861.00" x2="1320.36" y2="846.60" stroke="#252525" stroke-width="1.7"/><text x="1129.53" y="903.70" font-family="Liberation Mono" font-size="30.35" fill="#252525" textLength="72.98" lengthAdjust="spacingAndGlyphs" >34.17</text><text x="1309.56" y="903.70" font-family="Liberation Mono" font-size="30.35" fill="#252525" textLength="72.98" lengthAdjust="spacingAndGlyphs" >35.59</text><text x="1128.73" y="944.70" font-family="Liberation Mono" font-size="30.35" fill="#252525" textLength="72.98" lengthAdjust="spacingAndGlyphs" >64.55</text><text x="1309.56" y="944.70" font-family="Liberation Mono" font-size="30.35" fill="#252525" textLength="72.98" lengthAdjust="spacingAndGlyphs" >67.48</text><text x="1475.79" y="602.80" font-family="Liberation Mono" font-size="30.35" fill="#1f1f1f" font-weight="bold" textLength="87.58" lengthAdjust="spacingAndGlyphs" >412.73</text><text x="1656.62" y="602.80" font-family="Liberation Mono" font-size="30.35" fill="#1f1f1f" font-weight="bold" textLength="87.58" lengthAdjust="spacingAndGlyphs" >401.92</text><line x1="1675.02" y1="600.00" x2="1682.02" y2="585.60" stroke="#1f1f1f" stroke-width="2.4"/><text x="1475.79" y="657.00" font-family="Liberation Mono" font-size="30.35" fill="#1f1f1f" font-weight="bold" textLength="87.58" lengthAdjust="spacingAndGlyphs" >154.30</text><line x1="1552.57" y1="654.20" x2="1559.58" y2="639.80" stroke="#1f1f1f" stroke-width="2.4"/><text x="1656.62" y="657.00" font-family="Liberation Mono" font-size="30.35" fill="#1f1f1f" font-weight="bold" textLength="87.58" lengthAdjust="spacingAndGlyphs" >150.17</text><line x1="1689.61" y1="654.20" x2="1696.62" y2="639.80" stroke="#1f1f1f" stroke-width="2.4"/><text x="1490.39" y="697.10" font-family="Liberation Mono" font-size="30.35" fill="#252525" textLength="72.98" lengthAdjust="spacingAndGlyphs" >51.20</text><line x1="1552.57" y1="694.30" x2="1559.58" y2="679.90" stroke="#252525" stroke-width="1.7"/><text x="1671.22" y="697.10" font-family="Liberation Mono" font-size="30.35" fill="#252525" textLength="72.98" lengthAdjust="spacingAndGlyphs" >49.88</text><text x="1475.79" y="738.80" font-family="Liberation Mono" font-size="30.35" fill="#252525" textLength="87.58" lengthAdjust="spacingAndGlyphs" >103.10</text><line x1="1494.19" y1="736.00" x2="1501.19" y2="721.60" stroke="#252525" stroke-width="1.7"/><line x1="1552.57" y1="736.00" x2="1559.58" y2="721.60" stroke="#252525" stroke-width="1.7"/><text x="1656.62" y="738.80" font-family="Liberation Mono" font-size="30.35" fill="#252525" textLength="87.58" lengthAdjust="spacingAndGlyphs" >100.29</text><line x1="1675.02" y1="736.00" x2="1682.02" y2="721.60" stroke="#252525" stroke-width="1.7"/><line x1="1689.61" y1="736.00" x2="1696.62" y2="721.60" stroke="#252525" stroke-width="1.7"/><text x="1475.79" y="780.80" font-family="Liberation Mono" font-size="30.35" fill="#1f1f1f" font-weight="bold" textLength="87.58" lengthAdjust="spacingAndGlyphs" >258.43</text><text x="1656.62" y="780.80" font-family="Liberation Mono" font-size="30.35" fill="#1f1f1f" font-weight="bold" textLength="87.58" lengthAdjust="spacingAndGlyphs" >251.75</text><text x="1490.39" y="821.50" font-family="Liberation Mono" font-size="30.35" fill="#252525" textLength="72.98" lengthAdjust="spacingAndGlyphs" >44.70</text><line x1="1552.57" y1="818.70" x2="1559.58" y2="804.30" stroke="#252525" stroke-width="1.7"/><text x="1671.22" y="821.50" font-family="Liberation Mono" font-size="30.35" fill="#252525" textLength="72.98" lengthAdjust="spacingAndGlyphs" >43.96</text><text x="1475.79" y="863.80" font-family="Liberation Mono" font-size="30.35" fill="#252525" textLength="87.58" lengthAdjust="spacingAndGlyphs" >106.56</text><line x1="1494.19" y1="861.00" x2="1501.19" y2="846.60" stroke="#252525" stroke-width="1.7"/><text x="1656.62" y="863.80" font-family="Liberation Mono" font-size="30.35" fill="#252525" textLength="87.58" lengthAdjust="spacingAndGlyphs" >104.11</text><line x1="1675.02" y1="861.00" x2="1682.02" y2="846.60" stroke="#252525" stroke-width="1.7"/><text x="1490.39" y="903.70" font-family="Liberation Mono" font-size="30.35" fill="#252525" textLength="72.98" lengthAdjust="spacingAndGlyphs" >36.44</text><text x="1671.22" y="903.70" font-family="Liberation Mono" font-size="30.35" fill="#252525" textLength="72.98" lengthAdjust="spacingAndGlyphs" >35.02</text><line x1="1718.80" y1="900.90" x2="1725.81" y2="886.50" stroke="#252525" stroke-width="1.7"/><text x="1490.39" y="944.70" font-family="Liberation Mono" font-size="30.35" fill="#252525" textLength="72.98" lengthAdjust="spacingAndGlyphs" >70.73</text><line x1="1508.78" y1="941.90" x2="1515.79" y2="927.50" stroke="#252525" stroke-width="1.7"/><text x="1671.22" y="944.70" font-family="Liberation Mono" font-size="30.35" fill="#252525" textLength="72.98" lengthAdjust="spacingAndGlyphs" >68.66</text><text x="1837.45" y="602.80" font-family="Liberation Mono" font-size="30.35" fill="#1f1f1f" font-weight="bold" textLength="87.58" lengthAdjust="spacingAndGlyphs" >297.81</text><text x="2018.28" y="602.80" font-family="Liberation Mono" font-size="30.35" fill="#1f1f1f" font-weight="bold" textLength="87.58" lengthAdjust="spacingAndGlyphs" >265.90</text><line x1="2095.06" y1="600.00" x2="2102.07" y2="585.60" stroke="#1f1f1f" stroke-width="2.4"/><text x="1837.45" y="657.00" font-family="Liberation Mono" font-size="30.35" fill="#1f1f1f" font-weight="bold" textLength="87.58" lengthAdjust="spacingAndGlyphs" >120.07</text><line x1="1870.44" y1="654.20" x2="1877.45" y2="639.80" stroke="#1f1f1f" stroke-width="2.4"/><line x1="1899.63" y1="654.20" x2="1906.64" y2="639.80" stroke="#1f1f1f" stroke-width="2.4"/><text x="2018.28" y="657.00" font-family="Liberation Mono" font-size="30.35" fill="#1f1f1f" font-weight="bold" textLength="87.58" lengthAdjust="spacingAndGlyphs" >105.07</text><line x1="2036.68" y1="654.20" x2="2043.68" y2="639.80" stroke="#1f1f1f" stroke-width="2.4"/><line x1="2080.46" y1="654.20" x2="2087.47" y2="639.80" stroke="#1f1f1f" stroke-width="2.4"/><text x="1852.05" y="697.10" font-family="Liberation Mono" font-size="30.35" fill="#252525" textLength="72.98" lengthAdjust="spacingAndGlyphs" >36.32</text><text x="2032.88" y="697.10" font-family="Liberation Mono" font-size="30.35" fill="#252525" textLength="72.98" lengthAdjust="spacingAndGlyphs" >33.59</text><text x="1852.05" y="738.80" font-family="Liberation Mono" font-size="30.35" fill="#252525" textLength="72.98" lengthAdjust="spacingAndGlyphs" >83.75</text><text x="2033.68" y="738.80" font-family="Liberation Mono" font-size="30.35" fill="#252525" textLength="72.98" lengthAdjust="spacingAndGlyphs" >71.47</text><text x="1836.65" y="780.80" font-family="Liberation Mono" font-size="30.35" fill="#1f1f1f" font-weight="bold" textLength="87.58" lengthAdjust="spacingAndGlyphs" >177.74</text><text x="2018.28" y="780.80" font-family="Liberation Mono" font-size="30.35" fill="#1f1f1f" font-weight="bold" textLength="87.58" lengthAdjust="spacingAndGlyphs" >160.83</text><line x1="2051.27" y1="778.00" x2="2058.28" y2="763.60" stroke="#1f1f1f" stroke-width="2.4"/><text x="1852.05" y="821.50" font-family="Liberation Mono" font-size="30.35" fill="#252525" textLength="72.98" lengthAdjust="spacingAndGlyphs" >34.82</text><text x="2033.68" y="821.50" font-family="Liberation Mono" font-size="30.35" fill="#252525" textLength="72.98" lengthAdjust="spacingAndGlyphs" >32.57</text><text x="1852.85" y="863.80" font-family="Liberation Mono" font-size="30.35" fill="#252525" textLength="72.98" lengthAdjust="spacingAndGlyphs" >68.67</text><text x="2032.88" y="863.80" font-family="Liberation Mono" font-size="30.35" fill="#252525" textLength="72.98" lengthAdjust="spacingAndGlyphs" >61.31</text><text x="1852.05" y="903.70" font-family="Liberation Mono" font-size="30.35" fill="#252525" textLength="72.98" lengthAdjust="spacingAndGlyphs" >28.48</text><text x="2032.88" y="903.70" font-family="Liberation Mono" font-size="30.35" fill="#252525" textLength="72.98" lengthAdjust="spacingAndGlyphs" >25.45</text><text x="1852.05" y="944.70" font-family="Liberation Mono" font-size="30.35" fill="#252525" textLength="72.98" lengthAdjust="spacingAndGlyphs" >45.76</text><text x="2032.88" y="944.70" font-family="Liberation Mono" font-size="30.35" fill="#252525" textLength="72.98" lengthAdjust="spacingAndGlyphs" >41.50</text><line x1="2095.06" y1="941.90" x2="2102.07" y2="927.50" stroke="#252525" stroke-width="1.7"/></g><g id="dialogshadow"><rect x="1053" y="568" width="779" height="480" fill="#000" filter="url(#sh)"/></g><g id="dialog"><rect x="1053.00" y="568.00" width="779.00" height="480.00" fill="#ffffff" /><rect x="1089.00" y="853.00" width="707.00" height="54.00" fill="#f3f4f6" /><rect x="1089.00" y="931.00" width="707.00" height="67.00" fill="#0078d4" /></g><g id="dialogtext"><line x1="1770.50" y1="624.50" x2="1795.50" y2="649.50" stroke="#333333" stroke-width="2.2" /><line x1="1795.50" y1="624.50" x2="1770.50" y2="649.50" stroke="#333333" stroke-width="2.2" /><path d="M1286 955.3 L1304.2 948.9 L1313.8 951.6 V976.6 L1304.2 979.8 L1286 973.6 Z M1292.6 957 V971.6 L1304 974.6 V954 Z" stroke="none" stroke-width="2" fill="#ffffff" fill-rule="evenodd"/><text x="1089.34" y="653.00" font-family="Liberation Sans" font-size="49.42" fill="#2a2a2a" textLength="110.52" lengthAdjust="spacingAndGlyphs" >Login</text><text x="1089.16" y="727.80" font-family="Liberation Sans" font-size="28.20" fill="#262626" textLength="75.13" lengthAdjust="spacingAndGlyphs" >Please</text><text x="1171.62" y="727.80" font-family="Liberation Sans" font-size="28.20" fill="#262626" textLength="58.64" lengthAdjust="spacingAndGlyphs" >login</text><text x="1238.98" y="727.80" font-family="Liberation Sans" font-size="28.20" fill="#262626" textLength="49.16" lengthAdjust="spacingAndGlyphs" >with</text><text x="1295.40" y="727.80" font-family="Liberation Sans" font-size="28.20" fill="#262626" textLength="51.06" lengthAdjust="spacingAndGlyphs" >your</text><text x="1354.20" y="727.80" font-family="Liberation Sans" font-size="28.20" fill="#262626" textLength="73.38" lengthAdjust="spacingAndGlyphs" >Office</text><text x="1435.10" y="727.80" font-family="Liberation Sans" font-size="28.20" fill="#262626" textLength="42.41" lengthAdjust="spacingAndGlyphs" >365</text><text x="1484.96" y="727.80" font-family="Liberation Sans" font-size="28.20" fill="#262626" textLength="92.88" lengthAdjust="spacingAndGlyphs" >account</text><text x="1089.90" y="784.50" font-family="Liberation Sans" font-size="28.20" fill="#262626" textLength="66.54" lengthAdjust="spacingAndGlyphs" >While</text><text x="1164.10" y="784.50" font-family="Liberation Sans" font-size="28.20" fill="#262626" textLength="70.53" lengthAdjust="spacingAndGlyphs" >you&#x27;re</text><text x="1242.76" y="784.50" font-family="Liberation Sans" font-size="28.20" fill="#262626" textLength="121.22" lengthAdjust="spacingAndGlyphs" >navigating</text><text x="1370.60" y="784.50" font-family="Liberation Sans" font-size="28.20" fill="#262626" textLength="23.48" lengthAdjust="spacingAndGlyphs" >to</text><text x="1401.70" y="784.50" font-family="Liberation Sans" font-size="28.20" fill="#262626" textLength="37.96" lengthAdjust="spacingAndGlyphs" >the</text><text x="1446.85" y="784.50" font-family="Liberation Sans" font-size="28.20" fill="#262626" textLength="72.84" lengthAdjust="spacingAndGlyphs" >admin</text><text x="1526.79" y="784.50" font-family="Liberation Sans" font-size="28.20" fill="#262626" textLength="79.37" lengthAdjust="spacingAndGlyphs" >portal,</text><text x="1612.77" y="784.50" font-family="Liberation Sans" font-size="28.20" fill="#262626" textLength="74.62" lengthAdjust="spacingAndGlyphs" >Please</text><text x="1694.51" y="784.50" font-family="Liberation Sans" font-size="28.20" fill="#262626" textLength="91.87" lengthAdjust="spacingAndGlyphs" >confirm</text><text x="1090.20" y="825.00" font-family="Liberation Sans" font-size="28.20" fill="#262626" textLength="37.04" lengthAdjust="spacingAndGlyphs" >the</text><text x="1135.44" y="825.00" font-family="Liberation Sans" font-size="28.20" fill="#262626" textLength="70.54" lengthAdjust="spacingAndGlyphs" >below</text><text x="1214.08" y="825.00" font-family="Liberation Sans" font-size="28.20" fill="#262626" textLength="56.24" lengthAdjust="spacingAndGlyphs" >code</text><text x="1278.80" y="825.00" font-family="Liberation Sans" font-size="28.20" fill="#262626" textLength="32.18" lengthAdjust="spacingAndGlyphs" >for</text><text x="1319.10" y="825.00" font-family="Liberation Sans" font-size="28.20" fill="#262626" textLength="89.47" lengthAdjust="spacingAndGlyphs" >security</text><text x="1366.00" y="893.20" font-family="Liberation Mono" font-size="39.76" fill="#2b2b2b" textLength="153.09" lengthAdjust="spacingAndGlyphs" >472c990e</text><line x1="1485.79" y1="889.53" x2="1494.98" y2="870.67" stroke="#2b2b2b" stroke-width="1.7"/><text x="1334.03" y="972.80" font-family="Liberation Sans" font-size="28.49" fill="#ffffff" textLength="49.77" lengthAdjust="spacingAndGlyphs" >Sign</text><text x="1390.42" y="972.80" font-family="Liberation Sans" font-size="28.49" fill="#ffffff" textLength="21.79" lengthAdjust="spacingAndGlyphs" >in</text><text x="1420.10" y="972.80" font-family="Liberation Sans" font-size="28.49" fill="#ffffff" textLength="50.84" lengthAdjust="spacingAndGlyphs" >with</text><text x="1476.79" y="972.80" font-family="Liberation Sans" font-size="28.49" fill="#ffffff" textLength="74.76" lengthAdjust="spacingAndGlyphs" >Office</text><text x="1557.37" y="972.80" font-family="Liberation Sans" font-size="28.49" fill="#ffffff" textLength="44.10" lengthAdjust="spacingAndGlyphs" >365</text></g><g id="top"><rect x="7.00" y="1551.00" width="2870.00" height="2.00" fill="#d4d4d4" /><path d="M2272.07 1572.37 L2273.79 1567.34 L2279.41 1567.34 L2281.13 1572.37 L2281.41 1572.49 L2286.18 1570.15 L2290.15 1574.12 L2287.81 1578.89 L2287.93 1579.17 L2292.96 1580.89 L2292.96 1586.51 L2287.93 1588.23 L2287.81 1588.51 L2290.15 1593.28 L2286.18 1597.25 L2281.41 1594.91 L2281.13 1595.03 L2279.41 1600.06 L2273.79 1600.06 L2272.07 1595.03 L2271.79 1594.91 L2267.02 1597.25 L2263.05 1593.28 L2265.39 1588.51 L2265.27 1588.23 L2260.24 1586.51 L2260.24 1580.89 L2265.27 1579.17 L2265.39 1578.89 L2263.05 1574.12 L2267.02 1570.15 L2271.79 1572.49 Z" stroke="#3a3a3a" stroke-width="2.4" fill="none" stroke-linejoin="miter"/><circle cx="2276.6" cy="1583.7" r="6.8" fill="none" stroke="#0f4fa8" stroke-width="2"/><line x1="2320.00" y1="1584.00" x2="2342.00" y2="1584.00" stroke="#222222" stroke-width="2" /><rect x="2362.50" y="1564.50" width="123.00" height="44.00" fill="#ffffff" stroke="#a8a8a8" stroke-width="1.2" /><line x1="2499.00" y1="1585.00" x2="2522.00" y2="1585.00" stroke="#333333" stroke-width="2" /><line x1="2511.00" y1="1573.00" x2="2511.00" y2="1596.00" stroke="#333333" stroke-width="2" /><rect x="2567.00" y="1569.00" width="4.00" height="23.00" fill="#a0a0a0" /><path d="M2589 1570 L2578 1581 L2589 1591" stroke="#a0a0a0" stroke-width="3.6" fill="none" /><path d="M2617 1570 L2605 1581 L2617 1591" stroke="#a0a0a0" stroke-width="3.6" fill="none" /><path d="M2778 1570 L2790 1581 L2778 1591" stroke="#a0a0a0" stroke-width="3.6" fill="none" /><path d="M2806 1570 L2818 1581 L2806 1591" stroke="#a0a0a0" stroke-width="3.6" fill="none" /><rect x="2825.00" y="1569.00" width="4.00" height="23.00" fill="#a0a0a0" /><rect x="2839.00" y="1564.00" width="8.00" height="7.00" fill="#cccccc" /><rect x="2854.00" y="1564.00" width="8.00" height="7.00" fill="#cccccc" /><rect x="2839.00" y="1579.00" width="8.00" height="7.00" fill="#cccccc" /><rect x="2839.00" y="1592.00" width="9.00" height="10.00" fill="#ff3333" /><rect x="2853.00" y="1578.00" width="10.00" height="24.00" fill="#ffb000" /><rect x="2868.00" y="1563.00" width="10.00" height="39.00" fill="#55cc44" /><text x="7.13" y="1590.90" font-family="Liberation Sans" font-size="28.78" fill="#1f1f1f" textLength="91.75" lengthAdjust="spacingAndGlyphs" >Rows: 9</text><text x="2389.39" y="1596.70" font-family="Liberation Mono" font-size="29.74" fill="#1f1f1f" textLength="43.19" lengthAdjust="spacingAndGlyphs" >100</text><line x1="2407.53" y1="1593.96" x2="2414.44" y2="1579.84" stroke="#1f1f1f" stroke-width="1.7"/><line x1="2421.93" y1="1593.96" x2="2428.84" y2="1579.84" stroke="#1f1f1f" stroke-width="1.7"/><text x="2436.99" y="1596.70" font-family="Liberation Sans" font-size="29.94" fill="#1f1f1f" textLength="21.61" lengthAdjust="spacingAndGlyphs" >%</text><text x="2630.81" y="1591.20" font-family="Liberation Sans" font-size="29.51" fill="#1f1f1f" textLength="54.61" lengthAdjust="spacingAndGlyphs" >Page</text><text x="2695.45" y="1591.20" font-family="Liberation Sans" font-size="29.51" fill="#1f1f1f" textLength="14.39" lengthAdjust="spacingAndGlyphs" >1</text><text x="2719.79" y="1591.20" font-family="Liberation Sans" font-size="29.51" fill="#1f1f1f" textLength="22.38" lengthAdjust="spacingAndGlyphs" >of</text><text x="2750.05" y="1591.20" font-family="Liberation Sans" font-size="29.51" fill="#1f1f1f" textLength="14.39" lengthAdjust="spacingAndGlyphs" >1</text></g></svg>
</body></html>
